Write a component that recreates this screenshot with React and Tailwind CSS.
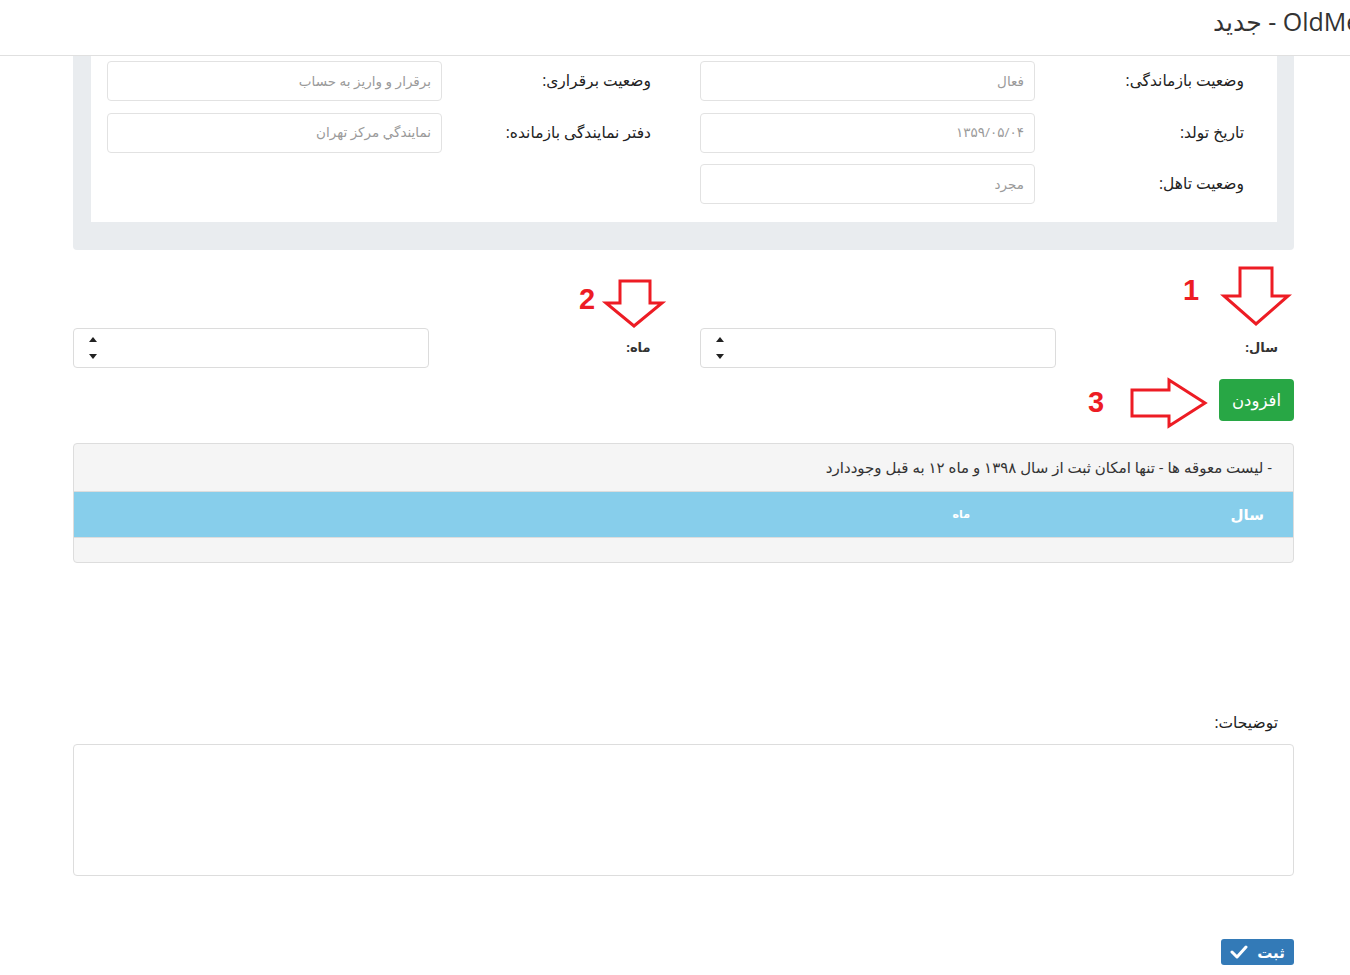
import React from "react";

const font = { fontFamily: '"Open Sans", "DejaVu Sans", sans-serif' };

function Field({ label, value }) {
  return (
    <div className="flex items-center pl-4 pr-[33px]">
      <div className="flex-1 text-[15.5px] text-[#222]">{label}</div>
      <div className="w-[335px] h-[40px] border border-[#e2e2e2] rounded-[4px] bg-white flex items-center px-[10px] text-[13.5px] text-[#9a9a9a]">
        {value}
      </div>
    </div>
  );
}

function Spinner() {
  return (
    <div className="flex flex-col gap-[12px] items-center">
      <svg width="8" height="5" viewBox="0 0 8 5"><polygon points="4,0 8,5 0,5" fill="#222" /></svg>
      <svg width="8" height="5" viewBox="0 0 8 5"><polygon points="0,0 8,0 4,5" fill="#222" /></svg>
    </div>
  );
}

function NumInput() {
  return (
    <div className="w-[356px] h-[40px] border border-[#dcdcdc] rounded-[4px] bg-white flex items-center justify-end pl-[15px]">
      <Spinner />
    </div>
  );
}

export default function App() {
  return (
    <div dir="rtl" className="relative w-[1350px] h-[975px] overflow-hidden bg-white" style={font}>
      {/* header */}
      <div dir="ltr" className="h-[56px] border-b border-[#e0e0e0] overflow-hidden whitespace-nowrap pl-[1213px] pt-[3px]">
        <span dir="rtl" className="inline-block text-[25px] leading-[36px] text-[#333]">OldMembers - جدید</span>
      </div>

      <div className="ml-[73px] mr-[56px]">
        {/* info panel */}
        <div className="bg-[#e9ecef] rounded-b-[4px] pl-[18px] pr-[17px] pb-[28px]">
          <div className="bg-white pt-[5px] pb-[18px] flex flex-col gap-[11.5px]">
            <div className="grid grid-cols-2">
              <Field label="وضعیت بازماندگی:" value="فعال" />
              <Field label="وضعیت برقراری:" value="برقرار و واریز به حساب" />
            </div>
            <div className="grid grid-cols-2">
              <Field label="تاریخ تولد:" value="۱۳۵۹/۰۵/۰۴" />
              <Field label="دفتر نمایندگی بازمانده:" value="نمایندگي مرکز  تهران" />
            </div>
            <div className="grid grid-cols-2">
              <Field label="وضعیت تاهل:" value="مجرد" />
              <div />
            </div>
          </div>
        </div>

        {/* year / month */}
        <div className="grid grid-cols-2 mt-[78px]">
          <div className="flex items-center pr-4 pl-4">
            <div className="flex-1 text-[13px] font-bold text-[#333]">سال:</div>
            <NumInput />
          </div>
          <div className="flex items-center pr-[33px]">
            <div className="flex-1 text-[13px] font-bold text-[#333]">ماه:</div>
            <NumInput />
          </div>
        </div>

        <div className="flex mt-[11px]">
          <div className="h-[42px] w-[75px] bg-[#28a745] rounded-[4px] text-white text-[16.5px] flex items-center justify-center">افزودن</div>
        </div>

        {/* table panel */}
        <div className="mt-[22px] border border-[#dddddd] rounded-[4px] bg-[#f5f5f5] overflow-hidden">
          <div className="h-[47px] flex items-center pr-[21px] text-[15px] text-[#333]">
            - لیست معوقه ها - تنها امکان ثبت از سال ۱۳۹۸ و ماه ۱۲ به قبل وجوددارد
          </div>
          <div className="h-[46px] bg-[#87ceeb] border-t border-[#dddddd] flex items-center text-white font-bold">
            <div className="w-[323px] pr-[29px] text-[15px]">سال</div>
            <div className="text-[11px]">ماه</div>
          </div>
          <div className="h-[25px] border-t border-[#dddddd]" />
        </div>

        {/* description */}
        <div className="mt-[149px] pr-4 text-[15.5px] text-[#222] leading-[20px]">توضیحات:</div>
        <div className="mt-[12px] h-[132px] border border-[#dddddd] rounded-[4px] bg-white" />

        <div className="flex mt-[63px]">
          <div className="h-[26px] w-[73px] bg-[#337ab7] rounded-[3px] text-white text-[15px] font-bold flex items-center justify-center gap-[9px]">
            <span>ثبت</span>
            <svg width="18" height="14" viewBox="0 0 18 14">
              <polyline points="2,7 7,12 16,2" fill="none" stroke="white" strokeWidth="3" strokeLinecap="round" strokeLinejoin="round" />
            </svg>
          </div>
        </div>
      </div>

      {/* annotations */}
      <svg className="absolute left-0 top-0 pointer-events-none" width="1350" height="975" viewBox="0 0 1350 975">
        <polygon points="1240,268 1272,268 1272,296 1288,296 1256,324 1224,296 1240,296" fill="white" stroke="#ed1c24" strokeWidth="3" />
        <polygon points="620,281 650,281 650,303 662,303 634,326 606,303 620,303" fill="white" stroke="#ed1c24" strokeWidth="3" />
        <polygon points="1132,390 1169,390 1169,380 1205,403 1169,426 1169,416 1132,416" fill="white" stroke="#ed1c24" strokeWidth="3" />
        <text x="1191" y="300" textAnchor="middle" fill="#ed1c24" fontSize="29" fontWeight="bold" fontFamily="Liberation Sans, sans-serif">1</text>
        <text x="587" y="309" textAnchor="middle" fill="#ed1c24" fontSize="29" fontWeight="bold" fontFamily="Liberation Sans, sans-serif">2</text>
        <text x="1096" y="412" textAnchor="middle" fill="#ed1c24" fontSize="29" fontWeight="bold" fontFamily="Liberation Sans, sans-serif">3</text>
      </svg>
    </div>
  );
}
